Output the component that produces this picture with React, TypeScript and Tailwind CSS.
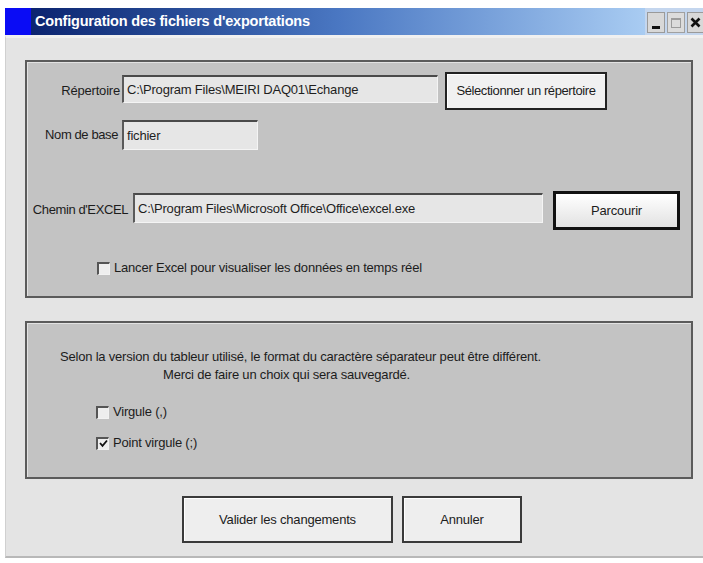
import React from "react";

const font = { fontFamily: '"Liberation Sans", Arial, sans-serif' };

function Field({ value, className }: { value: string; className: string }) {
  return (
    <div
      className={`flex items-center border-t-2 border-l-2 border-b border-r border-t-[#4a4a4a] border-l-[#5a5a5a] border-b-[#f4f4f4] border-r-[#f4f4f4] bg-[#e6e6e6] pl-[3px] text-[13px] text-[#1e1e1e] whitespace-nowrap overflow-hidden tracking-[-0.2px] ${className}`}
    >
      {value}
    </div>
  );
}

function CheckBox({ checked }: { checked?: boolean }) {
  return (
    <div className="w-[13px] h-[13px] shrink-0 border-t-2 border-l-2 border-t-[#555] border-l-[#555] border-b border-r border-b-[#f2f2f2] border-r-[#f2f2f2] bg-[#eeeeee] flex items-center justify-center">
      {checked && (
        <svg width="9" height="9" viewBox="0 0 9 9">
          <path d="M1 4 L3.5 6.8 L8 1.5" stroke="#111" strokeWidth="1.8" fill="none" />
        </svg>
      )}
    </div>
  );
}

function Panel({ children, className }: { children: React.ReactNode; className: string }) {
  return (
    <div
      className={`w-[668px] border-2 border-[#5b5b5b] bg-[#c3c3c3] shadow-[inset_1px_1px_0_#e2e2e2] ${className}`}
    >
      {children}
    </div>
  );
}

export default function App() {
  return (
    <div className="w-[703px] h-[563px] bg-white overflow-hidden pt-[8px] pl-[5px]" style={font}>
      <div className="w-[698px] h-[550px] flex flex-col">
        {/* title bar */}
        <div className="h-[27px] flex shrink-0">
          <div className="w-[26px] h-full bg-[#0a0cf5]" />
          <div className="flex-1 flex items-center bg-gradient-to-r from-[#0c2470] via-[#4a77c2] to-[#a9ccf2] pl-[4px]">
            <span className="text-white font-bold text-[14.5px] tracking-[-0.2px]">
              Configuration des fichiers d'exportations
            </span>
          </div>
          <div className="w-[58px] h-full bg-[#c4d6ee] flex items-end gap-[2px] pl-[2px] pb-[2px]">
            <div className="w-[18px] h-[21px] bg-[#d8d8d8] border border-[#9a9a9a] flex items-end justify-center pb-[3px]">
              <div className="w-[8px] h-[3px] bg-[#111]" />
            </div>
            <div className="w-[18px] h-[21px] bg-[#dcdcdc] border border-[#a0a0a0] flex items-center justify-center">
              <div className="w-[10px] h-[10px] border border-[#9c9c9c] border-t-2" />
            </div>
            <div className="w-[16px] h-[21px] bg-[#d8d8d8] border border-[#9a9a9a] border-r-0 flex items-center justify-center">
              <svg width="11" height="11" viewBox="0 0 11 11">
                <path d="M1.5 1.5 L9.5 9.5 M9.5 1.5 L1.5 9.5" stroke="#111" strokeWidth="2.6" />
              </svg>
            </div>
          </div>
        </div>

        {/* window body */}
        <div className="flex-1 bg-[#e4e4e4] border-t-[3px] border-t-[#f0f0f0] border-l border-l-[#d0d0d0] border-b-2 border-b-[#b8b8b8] pl-[19px] pt-[22px] text-[13px] tracking-[-0.2px] text-[#1c1c1c]">
          <Panel className="h-[238px]">
            {/* Répertoire */}
            <div className="flex items-start mt-[10px] h-[38px]">
              <div className="w-[93px] text-right mt-[9px] whitespace-nowrap">Répertoire</div>
              <Field value="C:\Program Files\MEIRI DAQ01\Echange" className="ml-[2px] mt-[3px] w-[316px] h-[28px]" />
              <div className="ml-[7px] w-[162px] h-[38px] border-2 border-[#222] bg-[#f1f1f1] shadow-[inset_1px_1px_0_#fff] flex items-center justify-center whitespace-nowrap tracking-[-0.4px]">
                Sélectionner un répertoire
              </div>
            </div>

            {/* Nom de base */}
            <div className="flex items-center mt-[10px] h-[30px]">
              <div className="w-[91px] text-right whitespace-nowrap tracking-[-0.4px]">Nom de base</div>
              <Field value="fichier" className="ml-[4px] w-[136px] h-[30px]" />
            </div>

            {/* Chemin d'EXCEL */}
            <div className="flex items-start mt-[41px] h-[39px]">
              <div className="w-[101px] text-right mt-[9px] whitespace-nowrap tracking-[-0.4px]">Chemin d'EXCEL</div>
              <Field
                value="C:\Program Files\Microsoft Office\Office\excel.exe"
                className="ml-[5px] mt-[2px] w-[410px] h-[30px]"
              />
              <div className="ml-[10px] w-[127px] h-[39px] border-[3px] border-[#111] bg-gradient-to-b from-[#ffffff] to-[#e2e2e2] flex items-center justify-center">
                Parcourir
              </div>
            </div>

            {/* launch option */}
            <div className="flex items-center mt-[30px] pl-[70px] gap-[4px] h-[16px]">
              <CheckBox />
              <span className="whitespace-nowrap">Lancer Excel pour visualiser les données en temps réel</span>
            </div>
          </Panel>

          <Panel className="h-[158px] mt-[23px]">
            <div className="pt-[25px] leading-[18px]">
              <div className="pl-[33px] whitespace-nowrap">
                Selon la version du tableur utilisé, le format du caractère séparateur peut être différent.
              </div>
              <div className="pl-[136px] whitespace-nowrap">Merci de faire un choix qui sera sauvegardé.</div>
            </div>
            <div className="mt-[20px] pl-[69px] flex flex-col gap-[15px]">
              <div className="flex items-center gap-[4px] h-[16px]">
                <CheckBox />
                <span>Virgule (,)</span>
              </div>
              <div className="flex items-center gap-[4px] h-[16px]">
                <CheckBox checked />
                <span>Point virgule (;)</span>
              </div>
            </div>
          </Panel>

          {/* dialog buttons */}
          <div className="flex mt-[17px] ml-[157px] gap-[9px]">
            <div className="w-[211px] h-[47px] border-2 border-[#3a3a3a] bg-[#eeeeee] shadow-[inset_1px_1px_0_#fff] flex items-center justify-center">
              Valider les changements
            </div>
            <div className="w-[120px] h-[47px] border-2 border-[#3a3a3a] bg-[#eeeeee] shadow-[inset_1px_1px_0_#fff] flex items-center justify-center">
              Annuler
            </div>
          </div>
        </div>
      </div>
    </div>
  );
}
